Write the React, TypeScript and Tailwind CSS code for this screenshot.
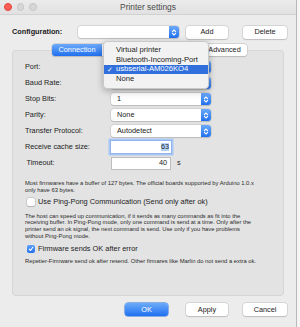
import React from 'react';

const font = { fontFamily: '"Liberation Sans", Arial, sans-serif' };

function Chevrons() {
  return (
    <svg width="6" height="9" viewBox="0 0 6 9" fill="none">
      <path d="M1.4 3.6 L3 2 L4.6 3.6 M1.4 5.4 L3 7 L4.6 5.4" stroke="white" strokeWidth="1.1" strokeLinecap="round" strokeLinejoin="round" />
    </svg>
  );
}

function Select({ value, width = 'w-[100px]' }: { value: string; width?: string }) {
  return (
    <div className={`flex h-[12px] ${width} items-center rounded-[3px] bg-white shadow-[0_0_0_0.5px_#c2c2c2,0_0.5px_1px_rgba(0,0,0,0.2)]`}>
      <span className="flex-1 pl-[6px] text-[7.3px] leading-none text-[#222]">{value}</span>
      <span className="flex h-[12px] w-[10px] items-center justify-center rounded-r-[3px] bg-linear-to-b from-[#6ba9f9] to-[#1f6fee]">
        <Chevrons />
      </span>
    </div>
  );
}

function Button({ label, width, primary }: { label: string; width: string; primary?: boolean }) {
  return (
    <div
      className={`flex h-[13px] ${width} items-center justify-center rounded-[3px] text-[7.3px] leading-none ${
        primary
          ? 'bg-linear-to-b from-[#6cabf9] to-[#1d6ff0] text-white shadow-[0_0_0_0.5px_#2a6fd9]'
          : 'bg-white text-[#222] shadow-[0_0_0_0.5px_#c2c2c2,0_0.5px_1px_rgba(0,0,0,0.2)]'
      }`}
    >
      {label}
    </div>
  );
}

function Row({ label, children, indent }: { label: string; children: React.ReactNode; indent?: boolean }) {
  return (
    <div className="flex h-[16px] items-center">
      <span className={`w-[86px] text-[7.3px] leading-none text-[#222] ${indent ? 'pl-[1.5px]' : ''}`}>{label}</span>
      {children}
    </div>
  );
}

function Checkbox({ checked }: { checked?: boolean }) {
  if (checked) {
    return (
      <span className="flex h-[8px] w-[8px] items-center justify-center rounded-[2px] bg-linear-to-b from-[#5ea0f8] to-[#226ff0]">
        <svg width="6" height="6" viewBox="0 0 6 6" fill="none">
          <path d="M1.2 3.2 L2.5 4.5 L4.8 1.3" stroke="white" strokeWidth="1.1" strokeLinecap="round" strokeLinejoin="round" />
        </svg>
      </span>
    );
  }
  return <span className="h-[8px] w-[8px] rounded-[2px] bg-white shadow-[0_0_0_0.5px_#b5b5b5,0_0.5px_1px_rgba(0,0,0,0.2)]" />;
}

export default function App() {
  return (
    <div className="flex h-[327px] w-[300px] bg-[#f5f5f5]" style={font}>
      <div className="relative flex h-[327px] w-[297px] flex-col border-r border-[#b9b9b9] bg-[#ececec]">
        {/* title bar */}
        <div className="relative flex h-[15px] items-center border-b border-[#d2d2d2] bg-linear-to-b from-[#ebebeb] to-[#e1e1e1]">
          <div className="flex items-center gap-[5px] pl-[4px]">
            <span className="h-[7.5px] w-[7.5px] rounded-full border-[0.5px] border-[#e0443e] bg-[#fd5f57]" />
            <span className="h-[7.5px] w-[7.5px] rounded-full border-[0.5px] border-[#c4c4c4] bg-[#d7d7d7]" />
            <span className="h-[7.5px] w-[7.5px] rounded-full border-[0.5px] border-[#c4c4c4] bg-[#d7d7d7]" />
          </div>
          <span className="absolute left-0 right-0 text-center text-[8.4px] leading-none text-[#4a4a4a]">Printer settings</span>
        </div>

        {/* configuration row */}
        <div className="mt-[11px] flex h-[12px] items-center pl-[12px]">
          <span className="w-[66px] text-[7.3px] font-bold leading-none text-[#222]">Configuration:</span>
          <div className="flex h-[12px] w-[101px] items-center rounded-[3px] bg-white shadow-[0_0_0_0.5px_#c2c2c2,0_0.5px_1px_rgba(0,0,0,0.2)]">
            <span className="flex-1" />
            <span className="flex h-[12px] w-[10px] items-center justify-center rounded-r-[3px] bg-linear-to-b from-[#6ba9f9] to-[#1f6fee]">
              <Chevrons />
            </span>
          </div>
          <div className="ml-[7px]">
            <Button label="Add" width="w-[42px]" />
          </div>
          <div className="ml-[15px]">
            <Button label="Delete" width="w-[44px]" />
          </div>
        </div>

        {/* tabs (middle segments sit under the open menu) */}
        <div className="relative z-10 mt-[6px] flex h-[12px] pl-[52px]">
          <div className="flex h-[12px] rounded-[3px] bg-white text-[7.3px] leading-none text-[#222] shadow-[0_0_0_0.5px_#c2c2c2,0_0.5px_1px_rgba(0,0,0,0.2)]">
            <span className="flex w-[50px] items-center justify-center rounded-l-[3px] bg-linear-to-b from-[#6ca9f9] to-[#1f6fee] text-white">Connection</span>
            <span className="w-[42px] border-r border-[#d0d0d0]" />
            <span className="w-[58px] border-r border-[#d0d0d0]" />
            <span className="flex w-[45px] items-center justify-center">Advanced</span>
          </div>
        </div>

        {/* group box */}
        <div className="mx-[12px] mt-[-6px] flex h-[246px] flex-col rounded-[4px] border-[0.5px] border-[#d6d6d6] bg-[#e3e3e3] pl-[12px] pt-[8px]">
          <Row label="Port:">
            <Select value="" />
          </Row>
          <Row label="Baud Rate:">
            <Select value="250000" />
          </Row>
          <Row label="Stop Bits:">
            <Select value="1" />
          </Row>
          <Row label="Parity:">
            <Select value="None" />
          </Row>
          <Row label="Transfer Protocol:">
            <Select value="Autodetect" />
          </Row>
          <Row label="Receive cache size:">
            <div className="flex h-[12px] w-[60px] items-center justify-end bg-white pr-[2px] shadow-[0_0_0_1px_#8fb4ee,0_0_0_2.5px_#a9c8f3]">
              <span className="bg-[#b3d3fb] text-[7.3px] leading-none text-[#222]">63</span>
            </div>
          </Row>
          <Row label="Timeout:" indent>
            <div className="flex h-[13px] w-[60px] items-center justify-end border-[0.5px] border-[#bdbdbd] bg-white pr-[3px] text-[7.3px] leading-none text-[#222]">
              40
            </div>
            <span className="ml-[6px] text-[7.3px] leading-none text-[#222]">s</span>
          </Row>

          <p className="mt-[8.5px] w-[250px] text-[5.8px] leading-[7px] text-[#2a2a2a]">
            Most firmwares have a buffer of 127 bytes. The official boards supported by Arduino 1.0.x
            <br />
            only have 63 bytes.
          </p>

          <div className="mt-[3.5px] flex h-[10px] items-center pl-[2px]">
            <Checkbox />
            <span className="ml-[3px] text-[7.4px] leading-none text-[#222]">Use Ping-Pong Communication (Send only after ok)</span>
          </div>

          <p className="mt-[5.5px] w-[250px] text-[5.8px] leading-[6.8px] text-[#2a2a2a]">
            The host can speed up communication, if it sends as many commands as fit into the
            <br />
            receiving buffer. In Ping-Pong mode, only one command is send at a time. Only after the
            <br />
            printer send an ok signal, the next command is send. Use only if you have problems
            <br />
            without Ping-Pong mode.
          </p>

          <div className="mt-[4px] flex h-[10px] items-center pl-[2px]">
            <Checkbox checked />
            <span className="ml-[3px] text-[7.4px] leading-none text-[#222]">Firmware sends OK after error</span>
          </div>

          <p className="mt-[4.5px] w-[260px] text-[5.8px] leading-[7px] text-[#2a2a2a]">
            Repetier-Firmware send ok after resend. Other firmares like Marlin do not send a extra ok.
          </p>
        </div>

        {/* bottom buttons */}
        <div className="mt-[7px] flex h-[13px] items-center pl-[125px]">
          <Button label="OK" width="w-[43px]" primary />
          <div className="ml-[18px]">
            <Button label="Apply" width="w-[42px]" />
          </div>
          <div className="ml-[15px]">
            <Button label="Cancel" width="w-[44px]" />
          </div>
        </div>

        {/* open port menu */}
        <div className="absolute left-[103px] top-[41px] z-20 flex w-[106px] flex-col rounded-[4px] border-[0.5px] border-[#c9c9c9] bg-[#f2f2f2] pb-[4px] pt-[2.5px] text-[7.6px] leading-none text-[#222] shadow-[0_2px_7px_rgba(0,0,0,0.28)]">
          <span className="flex h-[10px] items-center pl-[12px]">Virtual printer</span>
          <span className="flex h-[10px] items-center pl-[12px]">Bluetooth-Incoming-Port</span>
          <span className="relative flex h-[9.5px] items-center bg-[#3170dc] pl-[12px] text-white">
            <span className="absolute left-[3px] text-[7px]">✓</span>
            usbserial-AM026KO4
          </span>
          <span className="flex h-[10px] items-center pl-[12px]">None</span>
        </div>
      </div>
    </div>
  );
}
